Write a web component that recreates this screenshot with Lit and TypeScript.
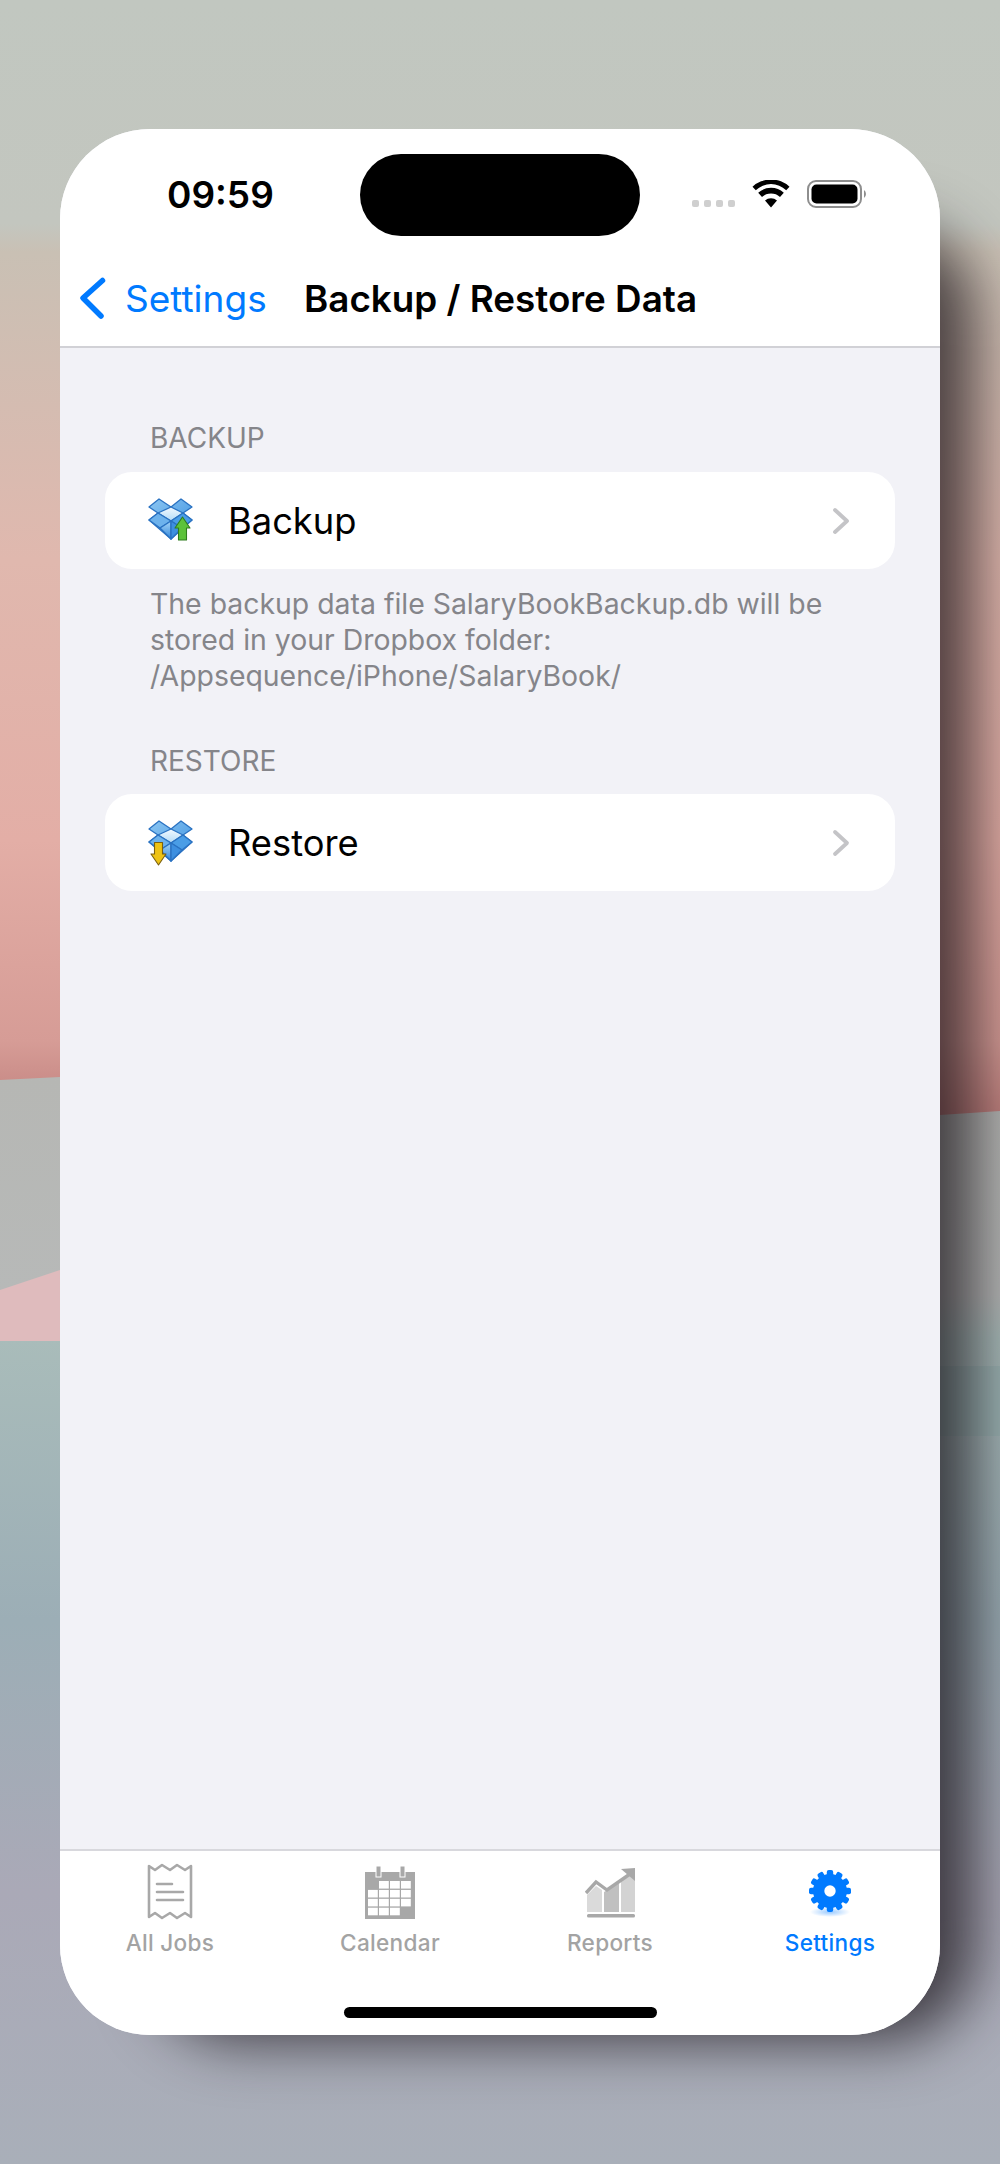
import { LitElement, html, css, svg } from "lit";
import { customElement } from "lit/decorators.js";

const boxIcon = (kind: "up" | "down") => svg`
  <svg class="box" viewBox="0 0 46 46" width="46" height="46">
    <defs>
      <linearGradient id="fl-${kind}" x1="0" y1="0" x2="1" y2="1"><stop offset="0" stop-color="#8cc6f2"/><stop offset="1" stop-color="#3a90e0"/></linearGradient>
      <linearGradient id="in-${kind}" x1="0" y1="0" x2="0" y2="1"><stop offset="0" stop-color="#f2f9ff"/><stop offset="1" stop-color="#b4dbf7"/></linearGradient>
      <linearGradient id="fr-${kind}" x1="0" y1="0" x2="0" y2="1"><stop offset="0" stop-color="#a8d6f7"/><stop offset="1" stop-color="#2f86dc"/></linearGradient>
    </defs>
    <g stroke="#2a72c2" stroke-width="1.3" stroke-linejoin="round">
      <path d="M23 9 L11 1 L1 9 L10 15 L1 22 L23 41 L44 22 L35 15 L44 9 L33 1Z" fill="url(#fl-${kind})"/>
      <path d="M10 15 L23 9 L35 15 L23 23Z" fill="url(#in-${kind})"/>
      <path d="M10 15 L23 23 L12 30 L1 22Z" fill="#6db2ec"/>
      <path d="M35 15 L23 23 L34 30 L44 22Z" fill="#4a9de6"/>
      <path d="M23 23 L23 41 L12 30Z" fill="url(#fr-${kind})"/>
      <path d="M23 23 L23 41 L34 30Z" fill="#3d8fe0"/>
    </g>
    ${kind === "up"
      ? svg`<path d="M34.5 19 L42 30 L38.5 30 L38.5 42 L30.5 42 L30.5 30 L27 30Z" fill="#5cc23a" stroke="#2f7d1e" stroke-width="1.1" stroke-linejoin="round"/>`
      : svg`<path d="M6.5 22.5 L14.5 22.5 L14.5 34 L18 34 L10.5 45 L3 34 L6.5 34Z" fill="#eec314" stroke="#7a6010" stroke-width="1.1" stroke-linejoin="round"/>`}
  </svg>`;

const chevron = svg`<svg class="chev" viewBox="0 0 18 28" width="18" height="28"><path d="M3 3 L15 14 L3 25" fill="none" stroke="#c4c4c7" stroke-width="3.8" stroke-linecap="round" stroke-linejoin="round"/></svg>`;

const receipt = svg`<svg viewBox="0 0 46 58" width="46" height="58"><g fill="none" stroke="#a8a8a8" stroke-width="2.6" stroke-linejoin="round" stroke-linecap="round">
  <path d="M2 3 L2 54 L8 50 L15 55 L23 50 L30 55 L38 50 L44 54 L44 3 L38 7 L30 2 L23 7 L15 2 L8 7Z"/>
  <path d="M10 21 L25 21 M10 29 L36 29 M10 37 L36 37"/></g></svg>`;

const calendar = () => {
  const cells: unknown[] = [];
  for (let r = 0; r < 4; r++)
    for (let c = 0; c < 4; c++) {
      if (r === 3 && c === 3) continue;
      if (r === 0 && c === 0) continue;
      cells.push(svg`<rect x="${3 + c * 11}" y="${15 + r * 8.9}" width="9.8" height="7.6" fill="#fff"/>`);
    }
  return svg`<svg class="cal" viewBox="0 0 50 54" width="50" height="54"><rect x="0" y="6" width="50" height="47" fill="#a8a8a8"/>
    <rect x="11" y="0" width="5" height="11" fill="#a8a8a8" stroke="#fff" stroke-width="1"/><rect x="35" y="0" width="5" height="11" fill="#a8a8a8" stroke="#fff" stroke-width="1"/>${cells}</svg>`;
};

const reports = svg`<svg class="rep" viewBox="0 0 50 52" width="50" height="52">
  <path d="M2 27 L11 18 L17 22 L17 44 L2 44Z" fill="#dadada"/><path d="M19 24 L34 15 L34 44 L19 44Z" fill="#c0c0c0"/><path d="M36 13 L50 5 L50 44 L36 44Z" fill="#d3d3d3"/>
  <rect x="2" y="46" width="48" height="3.5" rx="1.5" fill="#a8a8a8"/>
  <path d="M1 25 L11 14 L22 22 L45 6" fill="none" stroke="#a8a8a8" stroke-width="3.4"/>
  <path d="M36 1 L50 0 L50 13Z" fill="#a8a8a8"/></svg>`;

const gear = () => {
  const teeth = Array.from({ length: 12 }, (_, i) => svg`<rect x="-3.2" y="-21" width="6.4" height="9" rx="2" transform="rotate(${i * 30})" fill="#007aff"/>`);
  return svg`<svg viewBox="0 0 52 58" width="52" height="58">
    <defs><radialGradient id="gs"><stop offset="0" stop-color="#007aff" stop-opacity=".4"/><stop offset="1" stop-color="#007aff" stop-opacity="0"/></radialGradient></defs>
    <ellipse cx="26" cy="49" rx="20" ry="5" fill="url(#gs)"/>
    <g transform="translate(26 28)">${teeth}<circle r="17" fill="#007aff"/><circle r="5.7" fill="#fff"/></g></svg>`;
};

const backdrop = svg`<svg class="backdrop" viewBox="0 0 1000 2164" width="1000" height="2164">
  <defs>
    <linearGradient id="sky" x1="0" y1="0" x2="0" y2="1">
      <stop offset="0" stop-color="#c1c7c0"/><stop offset=".2" stop-color="#c3c6bf"/><stop offset=".225" stop-color="#c9c0b4"/>
      <stop offset=".5" stop-color="#e0b8ae"/><stop offset=".75" stop-color="#e3aea6"/><stop offset=".93" stop-color="#d69c96"/><stop offset="1" stop-color="#bf7f7c"/>
    </linearGradient>
    <linearGradient id="ground" x1="0" y1="0" x2="0" y2="1">
      <stop offset="0" stop-color="#b6b7b4"/><stop offset=".2" stop-color="#b7b9b8"/><stop offset=".24" stop-color="#a9bcba"/>
      <stop offset=".5" stop-color="#9caeb6"/><stop offset=".75" stop-color="#aaa9b7"/><stop offset="1" stop-color="#a9afb9"/>
    </linearGradient>
  </defs>
  <rect width="1000" height="1120" fill="url(#sky)"/>
  <path d="M0 1080 L60 1077 L940 1115 L1000 1111 L1000 2164 L0 2164Z" fill="url(#ground)"/>
  <path d="M0 1290 L60 1270 L60 1341 L0 1341Z" fill="#dfbbbd"/>
  <path d="M940 1366 L1000 1366 L1000 1436 L940 1436Z" fill="#98b2b2" opacity=".7"/>
</svg>`;

@customElement("app-root")
export class AppRoot extends LitElement {
  static styles = css`
    :host { display: block; width: 1000px; height: 2164px; overflow: hidden; font-family: Inter, "Liberation Sans", sans-serif; }
    .stage { position: relative; width: 1000px; height: 2164px; box-sizing: border-box; padding: 129px 60px 0; overflow: hidden; background: #b0b0b8; }
    .backdrop { position: absolute; left: 0; top: 0; display: block; }
    .shadow { position: absolute; left: 150px; top: 225px; width: 825px; height: 1815px; border-radius: 90px; background: rgba(15,10,15,.7); filter: blur(30px); }
    .phone { position: relative; width: 880px; height: 1906px; border-radius: 90px; overflow: hidden; background: #f2f2f7;
      display: flex; flex-direction: column; }
    .top { background: #fff; border-bottom: 2px solid #d1d1d6; height: 219px; box-sizing: border-box; display: flex; flex-direction: column; flex: none; }
    .status { height: 121px; flex: none; display: flex; align-items: flex-start; }
    .time { margin: 42px 0 0 107px; font-size: 37px; line-height: 48px; font-weight: 600; color: #000; width: 193px; flex: none; }
    .island { margin-top: 25px; width: 280px; height: 82px; border-radius: 41px; background: #000; flex: none; }
    .sig { display: flex; margin: 71px 0 0 52px; gap: 5px; flex: none; }
    .sig i { width: 7px; height: 7px; border-radius: 2px; background: #cfcfcf; display: block; }
    .wifi { margin: 51px 0 0 17px; flex: none; display: block; }
    .batt { margin: 51px 0 0 17px; flex: none; display: block; }
    .nav { display: flex; align-items: center; flex: 1; }
    .backic { margin-left: 19px; flex: none; display: block; }
    .back { margin-left: 18px; font-size: 37px; color: #007aff; width: 179px; flex: none; }
    .title { font-size: 36.8px; font-weight: 600; color: #000; }
    .content { flex: 1; padding: 0 45px; display: flex; flex-direction: column; }
    .sec { color: #85858a; font-size: 28px; line-height: 34px; padding-left: 45px; margin-top: 73px; margin-bottom: 17px; }
    .sec.second { margin-top: 50px; margin-bottom: 16px; }
    .row { background: #fff; border-radius: 27px; height: 97px; display: flex; align-items: center; padding: 0 45px 0 43px; }
    .row .box { flex: none; display: block; overflow: visible; }
    .row span { flex: 1; margin-left: 34px; font-size: 36.3px; color: #000; }
    .foot { color: #85858a; font-size: 28.4px; line-height: 36px; padding-left: 45px; margin-top: 17px; }
    .tabs { background: #fff; border-top: 2px solid #d8d8dd; height: 186px; box-sizing: border-box; flex: none; position: relative; display: grid; grid-template-columns: repeat(4, 220px); grid-auto-rows: min-content; }
    .tab { display: flex; flex-direction: column; align-items: center; color: #a3a3a3; font-size: 22.6px; font-weight: 500; }
    .tab .ic { height: 60px; margin-top: 12px; }
    .tab .ic svg { display: block; }
    .tab .ic .cal { margin-top: 3px; }
    .tab .ic .rep { margin-top: 5px; }
    .tab.on { color: #007aff; }
    .tab label { display: block; line-height: 30px; margin-top: 5px; letter-spacing: .3px; }
    .home { position: absolute; left: 284px; top: 156px; width: 313px; height: 11px; border-radius: 6px; background: #000; }
  `;

  render() {
    return html`<div class="stage">
      ${backdrop}
      <div class="shadow"></div>
      <div class="phone">
        <div class="top">
          <div class="status">
            <div class="time">09:59</div>
            <div class="island"></div>
            <div class="sig"><i></i><i></i><i></i><i></i></div>
            <svg class="wifi" viewBox="0 0 38 28" width="38" height="28"><path d="M19 27.5 L13 20.5 A9 9 0 0 1 25 20.5Z M10 17 L6.2 12.8 A19 19 0 0 1 31.8 12.8 L28 17 A13.5 13.5 0 0 0 10 17Z M3.8 10.2 L0.5 6.8 A27 27 0 0 1 37.5 6.8 L34.2 10.2 A22 22 0 0 0 3.8 10.2Z" fill="#000"/></svg>
            <svg class="batt" viewBox="0 0 62 28" width="62" height="28"><rect x="1" y="1" width="53" height="26" rx="8" fill="#fff" stroke="#8e8e8e" stroke-width="2"/><rect x="4.5" y="4.5" width="46" height="19" rx="5" fill="#000"/><path d="M57 10 A5 5 0 0 1 57 18Z" fill="#8e8e8e"/></svg>
          </div>
          <div class="nav">
            <svg class="backic" viewBox="0 0 28 44" width="28" height="44"><path d="M23.5 4.5 L4 22 L22 40" fill="none" stroke="#007aff" stroke-width="5.5" stroke-linecap="round" stroke-linejoin="round"/></svg>
            <div class="back">Settings</div>
            <div class="title">Backup / Restore Data</div>
          </div>
        </div>
        <div class="content">
          <div class="sec">BACKUP</div>
          <div class="row">${boxIcon("up")}<span>Backup</span>${chevron}</div>
          <div class="foot">The backup data file SalaryBookBackup.db will be<br>stored in your Dropbox folder:<br>/Appsequence/iPhone/SalaryBook/</div>
          <div class="sec second">RESTORE</div>
          <div class="row">${boxIcon("down")}<span>Restore</span>${chevron}</div>
        </div>
        <div class="tabs">
          <div class="tab"><div class="ic">${receipt}</div><label>All Jobs</label></div>
          <div class="tab"><div class="ic">${calendar()}</div><label>Calendar</label></div>
          <div class="tab"><div class="ic">${reports}</div><label>Reports</label></div>
          <div class="tab on"><div class="ic">${gear()}</div><label>Settings</label></div>
          <div class="home"></div>
        </div>
      </div>
    </div>`;
  }
}
